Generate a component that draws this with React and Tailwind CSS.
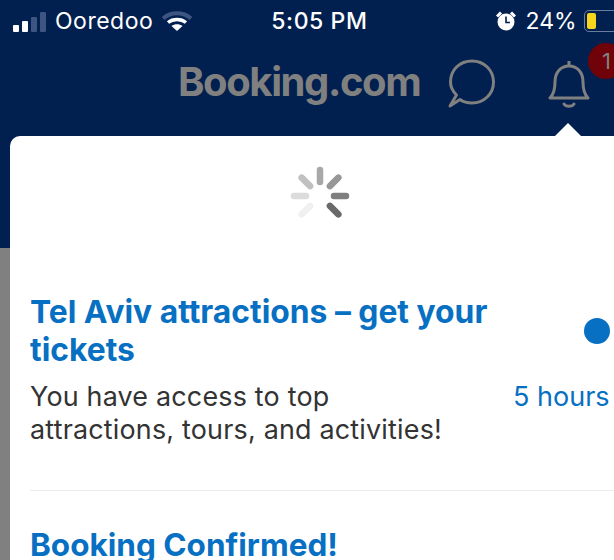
import React from 'react'

const spokes = [
  { angle: 0, color: '#a8a8a8' },
  { angle: 45, color: '#979797' },
  { angle: 90, color: '#7f7f7f' },
  { angle: 135, color: '#6a6a6a' },
  { angle: 225, color: '#f0f0f0' },
  { angle: 270, color: '#dcdcdc' },
  { angle: 315, color: '#c0c0c0' },
]

function Spinner() {
  return (
    <svg width="64" height="60" viewBox="-32 -30 64 60">
      {spokes.map(s => (
        <line
          key={s.angle}
          x1="0"
          y1="-14"
          x2="0"
          y2="-26"
          stroke={s.color}
          strokeWidth="6.5"
          strokeLinecap="round"
          transform={`rotate(${s.angle})`}
        />
      ))}
    </svg>
  )
}

function StatusBar() {
  return (
    <div className="flex h-[42px] items-center whitespace-nowrap text-white">
      <div className="ml-[13px] flex shrink-0 items-end gap-[3px] pt-[1px]">
        <div className="h-[7px] w-[6px] rounded-[1px] bg-white" />
        <div className="h-[11px] w-[6px] rounded-[1px] bg-white" />
        <div className="h-[15px] w-[6px] rounded-[1px] bg-[#3d5580]" />
        <div className="h-[20px] w-[6px] rounded-[1px] bg-[#3d5580]" />
      </div>
      <span className="ml-[9px] shrink-0 text-[23px] tracking-[0.5px]">Ooredoo</span>
      <svg className="ml-[9px] shrink-0" width="30" height="22" viewBox="0 0 30 22">
        <path d="M1 8.5C9 1.5 21 1.5 29 8.5" fill="none" stroke="#3d5580" strokeWidth="4" />
        <path d="M6 12.5C11 8.5 19 8.5 24 12.5" fill="none" stroke="#fff" strokeWidth="3.5" />
        <path d="M15 21L9.5 16C12.5 13.8 17.5 13.8 20.5 16Z" fill="#fff" />
      </svg>
      <span className="ml-[79px] shrink-0 text-[23px] font-medium tracking-[0.6px]">5:05 PM</span>
      <svg className="ml-[128px] shrink-0" width="20" height="22" viewBox="0 0 20 22">
        <circle cx="10" cy="12" r="8.5" fill="#fff" />
        <path d="M10 6.5V12.5H14" fill="none" stroke="#01204f" strokeWidth="1.6" />
        <path d="M1 6.5L5 2.5M19 6.5L15 2.5" stroke="#fff" strokeWidth="3" />
      </svg>
      <span className="ml-[10px] shrink-0 text-[23px]">24%</span>
      <div className="ml-[7px] h-[22px] w-[40px] shrink-0 rounded-[5px] border border-[#6a7d9e] p-[2px]">
        <div className="h-full w-[9px] rounded-[2px] bg-[#f7d51d]" />
      </div>
    </div>
  )
}

function Header() {
  return (
    <div className="relative flex h-[94px] items-start text-[#808080]">
      <span className="ml-[178px] mt-[17px] text-[40px] font-bold leading-[46px] tracking-[-1.4px]">Booking.com</span>
      <svg className="ml-[27px] mt-[16px]" width="50" height="50" viewBox="0 0 50 50" fill="none" stroke="#808080" strokeWidth="3">
        <path d="M3 48L9.5 37C6 33.5 3.500 28.500 3.500 24C3.500 12 12.500 3 25 3C37 3 46.500 12 46.500 24C46.500 36 37 45 25 45C20.500 45 16.500 44 13 41.500Z" strokeLinejoin="round" />
      </svg>
      <svg className="ml-[51px] mt-[18px]" width="42" height="50" viewBox="0 0 42 50" fill="none" stroke="#808080" strokeWidth="3">
        <path d="M2 38H40C36 34 35 30 35 22C35 12 29 6 21 6C13 6 7 12 7 22C7 30 6 34 2 38Z" strokeLinejoin="round" />
        <path d="M21 1V6" />
        <path d="M16 44C18 47 24 47 26 44" strokeLinecap="round" />
      </svg>
      <div className="absolute left-[588px] top-[1px] flex h-[36px] w-[36px] items-center rounded-full bg-[#6f0309] pl-[14px] text-[22px] text-[#808080]">
        1
      </div>
      <div className="absolute bottom-0 left-[555px] h-0 w-0 border-x-[13px] border-b-[13px] border-x-transparent border-b-white" />
    </div>
  )
}

export default function App() {
  return (
    <div className="h-[560px] w-[614px] overflow-hidden bg-[#01204f] font-['Inter',sans-serif]">
      <StatusBar />
      <Header />
      <div className="h-[424px] bg-[linear-gradient(#01204f_112px,#808080_112px)] pl-[10px]">
        <div className="h-full w-[640px] rounded-tl-[10px] bg-white pl-[21px]">
          <div className="flex justify-center pr-[41px] pt-[30px]">
            <Spinner />
          </div>
          <div className="mt-[67px] flex">
            <div className="w-[470px]">
              <h2 className="-ml-[1px] text-[31.8px] font-bold leading-[38px] text-[#0770c2]">
                Tel Aviv attractions – get your tickets
              </h2>
              <p className="-ml-[1px] mt-[11px] max-w-[430px] text-[26.9px] leading-[33px] tracking-[0.2px] text-[#333333]">
                You have access to top attractions, tours, and activities!
              </p>
            </div>
            <div className="ml-[12px] flex flex-col">
              <div className="ml-[71px] mt-[25px] h-[26px] w-[26px] rounded-full bg-[#0770c2]" />
              <span className="mt-[36px] text-[27px] leading-[33px] text-[#0770c2]">5 hours</span>
            </div>
          </div>
          <div className="-ml-[1px] mt-[44px] h-px bg-[#ebebeb]" />
          <h2 className="-ml-[1px] mt-[35px] text-[31.5px] font-bold leading-[38px] text-[#0770c2]">Booking Confirmed!</h2>
        </div>
      </div>
    </div>
  )
}
